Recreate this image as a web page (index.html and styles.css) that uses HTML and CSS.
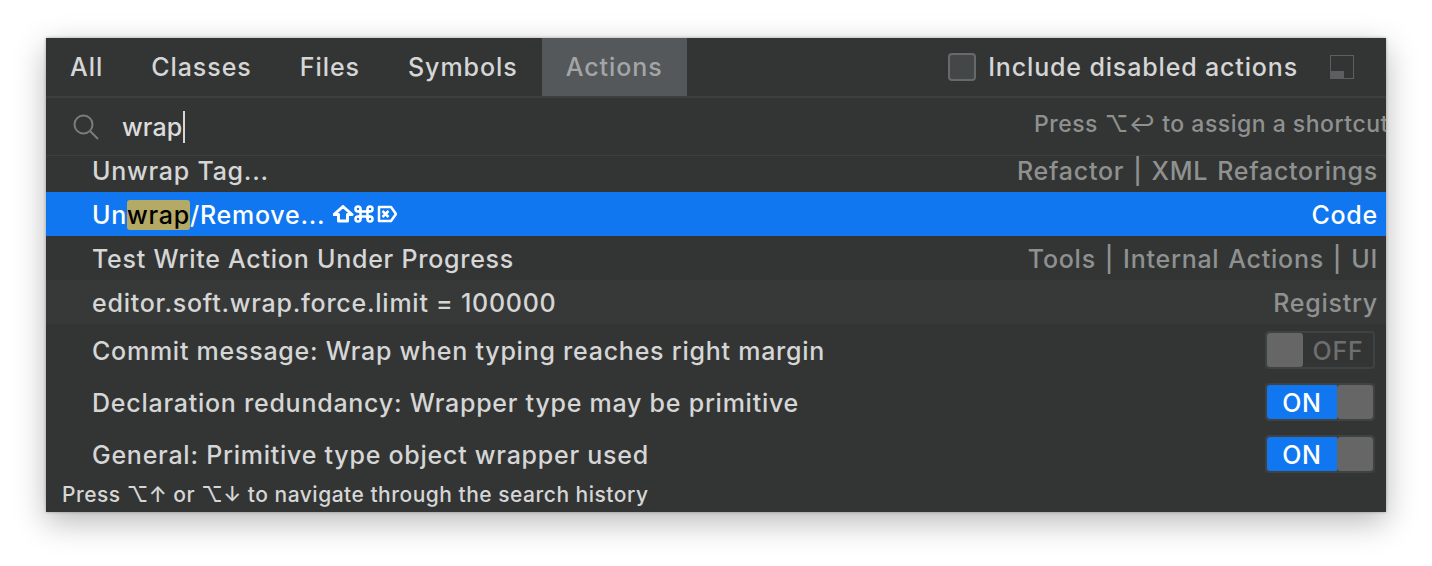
FILE: index.html
```html
<!DOCTYPE html>
<html lang="en">
<head>
    <meta charset="UTF-8">
    <title>Search Everywhere</title>
    <link rel="stylesheet" href="styles.css">
</head>
<body>

<div class="popup">
    <div class="tabs">
        <span class="tab">All</span>
        <span class="tab">Classes</span>
        <span class="tab">Files</span>
        <span class="tab">Symbols</span>
        <span class="tab active">Actions</span>
        <label class="include">
            <span class="checkbox"></span>
            Include disabled actions
        </label>
        <svg class="pin" width="24" height="24" viewBox="0 0 24 24">
            <path d="M0 0H24V24H0Z M1 1V23H23V1Z" fill="#5c5e5f" fill-rule="evenodd"/>
            <rect x="1" y="16" width="13" height="7" fill="#5c5e5f"/>
        </svg>
    </div>

    <div class="search">
        <svg class="search-icon" width="26" height="26" viewBox="0 0 26 26" fill="none" stroke="#7a7c7d" stroke-width="2">
            <circle cx="10.5" cy="10.5" r="9"/>
            <path d="M17 17L25 25"/>
        </svg>
        <div class="query">wrap<span class="caret"></span></div>
        <div class="hint">Press ⌥↩ to assign a shortcut</div>
    </div>

    <div class="results">
        <div class="row first">
            <span>Unwrap Tag...</span>
            <span class="path">Refactor | XML Refactorings</span>
        </div>
        <div class="row selected">
            <span>Un<span class="match">wrap</span>/Remove...</span>
            <svg class="keys" width="64" height="18" viewBox="0 0 64 18" fill="none" stroke="#fff" stroke-width="3" stroke-linejoin="round">
                <path d="M10 1.500L19 9.500H14.500V16H5.500V9.500H1Z"/>
                <g stroke-width="2.500">
                    <circle cx="25" cy="4" r="2.500"/>
                    <circle cx="37" cy="4" r="2.500"/>
                    <circle cx="25" cy="14" r="2.500"/>
                    <circle cx="37" cy="14" r="2.500"/>
                    <path d="M27.500 4V14M34.500 4V14M25 6.500H37M25 11.500H37"/>
                    <path d="M46 2H58L63 9L58 16H46Z"/>
                    <path d="M49.500 6L55.500 12M55.500 6L49.500 12"/>
                </g>
            </svg>
            <span class="path">Code</span>
        </div>
        <div class="row">
            <span>Test Write Action Under Progress</span>
            <span class="path">Tools | Internal Actions | UI</span>
        </div>
        <div class="row lighter">
            <span>editor.soft.wrap.force.limit = 100000</span>
            <span class="path">Registry</span>
        </div>
        <div class="row option">
            <span>Commit message: Wrap when typing reaches right margin</span>
            <span class="switch off"><span class="knob"></span><span class="label">OFF</span></span>
        </div>
        <div class="row option">
            <span>Declaration redundancy: Wrapper type may be primitive</span>
            <span class="switch on"><span class="label">ON</span><span class="knob"></span></span>
        </div>
        <div class="row option">
            <span>General: Primitive type object wrapper used</span>
            <span class="switch on"><span class="label">ON</span><span class="knob"></span></span>
        </div>
    </div>

    <div class="footer">Press ⌥↑ or ⌥↓ to navigate through the search history</div>
</div>

</body>
</html>
```

FILE: styles.css
```css
body {
    margin: 0;
    height: 566px;
    background-color: #fff;
    font-family: Inter, "Noto Sans", sans-serif;
    overflow: hidden;
}
.popup {
    margin: 38px 46px 0;
    width: 1340px;
    height: 474px;
    background-color: #333534;
    color: #d6d6d6;
    font-size: 25px;
    font-weight: 500;
    letter-spacing: 0.75px;
    box-shadow: 0 10px 30px rgba(0, 0, 0, 0.28), 0 0 3px rgba(0, 0, 0, 0.3);
    overflow: hidden;
    display: flex;
    flex-direction: column;
}
.tabs {
    height: 58px;
    display: flex;
    align-items: stretch;
    border-bottom: 2px solid #3d3f3f;
}
.tab {
    padding: 0 24px;
    letter-spacing: 0.95px;
    display: flex;
    align-items: center;
}
.tab.active {
    background-color: #54585b;
    color: #a3a5a6;
}
.include {
    margin-left: auto;
    letter-spacing: 0.85px;
    display: flex;
    align-items: center;
    gap: 12px;
}
.checkbox {
    width: 24px;
    height: 24px;
    border: 2px solid #666a6b;
    border-radius: 4px;
    background-color: #434748;
}
.pin {
    align-self: center;
    margin: 0 32px;
}
.search {
    height: 57px;
    display: flex;
    align-items: center;
    border-bottom: 1px solid #3d3f3f;
}
.search-icon {
    margin-left: 27px;
}
.query {
    margin-left: 23px;
    flex: 1;
    color: #dcdcdc;
    letter-spacing: 0.1px;
    display: flex;
    align-items: center;
}
.caret {
    width: 2px;
    height: 32px;
    background-color: #d6d6d6;
    margin-left: 1px;
}
.hint {
    flex: 0 0 352px;
    white-space: nowrap;
    overflow: hidden;
    font-size: 23px;
    letter-spacing: 0.5px;
    color: #8f9191;
    margin-bottom: 6px;
}
.results {
    flex: 1;
}
.row {
    height: 44px;
    padding: 0 8px 0 46px;
    display: flex;
    align-items: center;
    white-space: nowrap;
}
.row > span:first-child,
.path {
    padding-top: 2px;
}
.row.first {
    height: 36px;
    padding-bottom: 8px;
    box-sizing: border-box;
}
.row.lighter {
    background-color: #373938;
}
.row.option {
    height: 52px;
}
.row.selected {
    background-color: #1077f0;
    color: #fff;
}
.path {
    margin-left: auto;
    color: #8f9191;
    word-spacing: 1.5px;
}
.selected .path {
    color: #fff;
}
.match {
    background-color: #b5aa65;
    color: #000;
    border-radius: 3px;
    display: inline-block;
}
.keys {
    margin-left: 8px;
}
.switch {
    margin-left: auto;
    margin-right: 3px;
    width: 110px;
    height: 38px;
    box-sizing: border-box;
    border: 2px solid #3f4242;
    border-radius: 4px;
    display: flex;
    align-items: stretch;
    font-size: 25px;
}
.knob {
    width: 36px;
    background-color: #666;
    border-radius: 3px;
}
.label {
    flex: 1;
    padding-top: 2px;
    display: flex;
    align-items: center;
    justify-content: center;
}
.off .label {
    color: #6e6e6e;
}
.on .label {
    background-color: #1077f0;
    color: #fff;
    border-radius: 3px 0 0 3px;
}
.footer {
    height: 30px;
    padding-left: 16px;
    font-size: 21px;
    letter-spacing: 0.5px;
    color: #d6d6d6;
}
```
